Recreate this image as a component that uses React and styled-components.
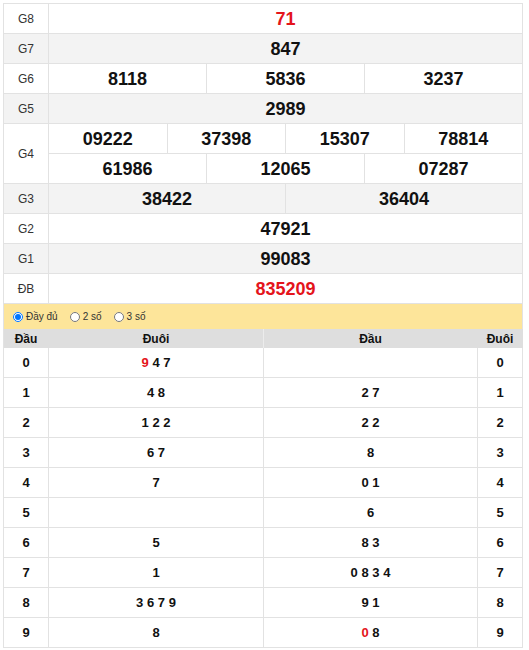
import React from 'react';
import styled, { createGlobalStyle } from 'styled-components';

const GlobalStyle = createGlobalStyle`
  * { box-sizing: border-box; }
  body {
    margin: 0;
    background: #fff;
    font-family: 'Liberation Sans', Arial, sans-serif;
    color: #111;
  }
`;

const Page = styled.div`
  padding: 3px 0 0 3px;
`;

const Board = styled.div`
  width: 520px;
  border-top: 1px solid #e2e2e2;
  border-left: 1px solid #e2e2e2;
`;

const Row = styled.div`
  display: flex;
  background: ${p => (p.$shade ? '#f3f3f3' : '#fff')};
`;

const Label = styled.div`
  width: 45px;
  flex: none;
  display: flex;
  align-items: center;
  justify-content: center;
  font-size: 12px;
  color: #333;
  border-right: 1px solid #e2e2e2;
  border-bottom: 1px solid #e2e2e2;
`;

const Stack = styled.div`
  flex: 1;
  display: flex;
  flex-direction: column;
`;

const Cells = styled.div`
  flex: none;
  display: flex;
  height: 30px;
`;

const Prize = styled.div`
  flex: 1;
  display: flex;
  align-items: center;
  justify-content: center;
  padding-top: 1px;
  font-size: 18px;
  font-weight: bold;
  color: ${p => (p.$red ? '#e4141b' : '#111')};
  border-right: 1px solid #e2e2e2;
  border-bottom: 1px solid #e2e2e2;
`;

const Options = styled.div`
  height: 25px;
  background: #fde59a;
  display: flex;
  align-items: center;
  gap: 12px;
  padding-left: 9px;
  border-right: 1px solid #e2e2e2;
  font-size: 10px;
  color: #333;
`;

const Option = styled.label`
  display: flex;
  align-items: center;
  gap: 3px;

  input {
    margin: 0;
    width: 10px;
    height: 10px;
  }
`;

const Grid = styled.div`
  display: grid;
  grid-template-columns: 45px 215px 214px 45px;
`;

const Head = styled.div`
  height: 19px;
  background: #dedede;
  display: flex;
  align-items: center;
  justify-content: center;
  font-size: 12px;
  font-weight: bold;
  border-right: 1px solid ${p => (p.$line ? '#ececec' : '#dedede')};
`;

const Cell = styled.div`
  height: 30px;
  display: flex;
  align-items: center;
  justify-content: center;
  font-size: 13px;
  font-weight: bold;
  border-right: 1px solid #e2e2e2;
  border-bottom: 1px solid #e2e2e2;
`;

const Seq = styled.span`
  white-space: pre;
`;

const Red = styled.span`
  color: #e4141b;
`;

const prizes = [
  { label: 'G8', rows: [['71']], red: true },
  { label: 'G7', rows: [['847']] },
  { label: 'G6', rows: [['8118', '5836', '3237']] },
  { label: 'G5', rows: [['2989']] },
  { label: 'G4', rows: [['09222', '37398', '15307', '78814'], ['61986', '12065', '07287']] },
  { label: 'G3', rows: [['38422', '36404']] },
  { label: 'G2', rows: [['47921']] },
  { label: 'G1', rows: [['99083']] },
  { label: 'ĐB', rows: [['835209']], red: true },
];

const loto = [
  { n: 0, tail: ['9', '4', '7'], redTail: '9', head: [] },
  { n: 1, tail: ['4', '8'], head: ['2', '7'] },
  { n: 2, tail: ['1', '2', '2'], head: ['2', '2'] },
  { n: 3, tail: ['6', '7'], head: ['8'] },
  { n: 4, tail: ['7'], head: ['0', '1'] },
  { n: 5, tail: [], head: ['6'] },
  { n: 6, tail: ['5'], head: ['8', '3'] },
  { n: 7, tail: ['1'], head: ['0', '8', '3', '4'] },
  { n: 8, tail: ['3', '6', '7', '9'], head: ['9', '1'] },
  { n: 9, tail: ['8'], head: ['0', '8'], redHead: '0' },
];

function Digits({ list, red }) {
  return (
    <Seq>
      {list.map((d, i) => (
        <React.Fragment key={i}>
          {i > 0 && ' '}
          {i === 0 && d === red ? <Red>{d}</Red> : d}
        </React.Fragment>
      ))}
    </Seq>
  );
}

export default function App() {
  return (
    <Page>
      <GlobalStyle />
      <Board>
        {prizes.map((p, i) => (
          <Row key={p.label} $shade={i % 2 === 1}>
            <Label>{p.label}</Label>
            <Stack>
              {p.rows.map((r, j) => (
                <Cells key={j}>
                  {r.map(v => (
                    <Prize key={v} $red={p.red}>{v}</Prize>
                  ))}
                </Cells>
              ))}
            </Stack>
          </Row>
        ))}
        <Options>
          <Option><input type="radio" name="mode" defaultChecked />Đầy đủ</Option>
          <Option><input type="radio" name="mode" />2 số</Option>
          <Option><input type="radio" name="mode" />3 số</Option>
        </Options>
        <Grid>
          <Head>Đầu</Head>
          <Head $line>Đuôi</Head>
          <Head>Đầu</Head>
          <Head>Đuôi</Head>
          {loto.map(r => (
            <React.Fragment key={r.n}>
              <Cell>{r.n}</Cell>
              <Cell><Digits list={r.tail} red={r.redTail} /></Cell>
              <Cell><Digits list={r.head} red={r.redHead} /></Cell>
              <Cell>{r.n}</Cell>
            </React.Fragment>
          ))}
        </Grid>
      </Board>
    </Page>
  );
}
